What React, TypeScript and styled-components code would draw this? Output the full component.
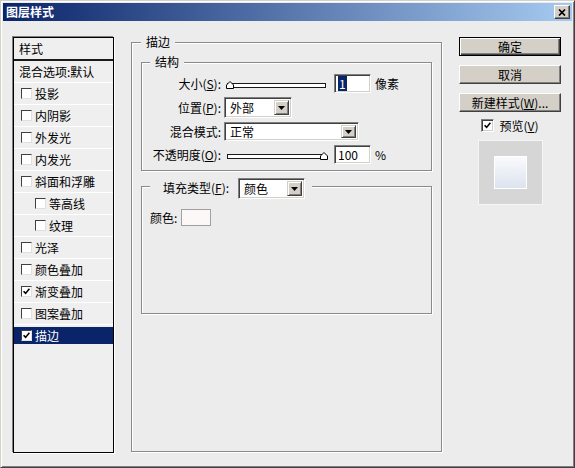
import styled, { createGlobalStyle } from "styled-components"

const GlobalStyle = createGlobalStyle`
*{
    box-sizing: border-box;
}
html, body{
    margin: 0;
    padding: 0;
    background: #ececec;
}
body{
    font-family: "Noto Sans CJK SC", "Liberation Sans", sans-serif;
    font-size: 12px;
    color: #000;
}
`

type Effect = { label: string; checked?: boolean; indent?: boolean; selected?: boolean }

const effects: Effect[] = [
    { label: "投影" },
    { label: "内阴影" },
    { label: "外发光" },
    { label: "内发光" },
    { label: "斜面和浮雕" },
    { label: "等高线", indent: true },
    { label: "纹理", indent: true },
    { label: "光泽" },
    { label: "颜色叠加" },
    { label: "渐变叠加", checked: true },
    { label: "图案叠加" },
    { label: "描边", checked: true, selected: true },
]

const Tick = () => (
    <svg width="7" height="7" viewBox="0 0 7 7">
        <path d="M0.6 3.2 L2.6 5.4 L6.4 0.8" fill="none" stroke="#000" strokeWidth="1.6" />
    </svg>
)

const DownArrow = () => (
    <svg width="7" height="4" viewBox="0 0 7 4">
        <path d="M0 0 H7 L3.5 4 Z" fill="#000" />
    </svg>
)

const CloseGlyph = () => (
    <svg width="8" height="7" viewBox="0 0 8 7">
        <path d="M1 0.5 L7 6.5 M7 0.5 L1 6.5" stroke="#000" strokeWidth="1.7" />
    </svg>
)

// slider: value 0..100, thumb slides along the track
const Slider = ({ value }: { value: number }) => (
    <SliderBox>
        <Track />
        <Thumb style={{ left: 2 + (value / 100) * 94 }}>
            <svg width="8" height="8" viewBox="0 0 8 8">
                <path d="M0.5 7.5 V4 L4 0.5 L7.5 4 V7.5 Z" fill="#fff" stroke="#000" />
            </svg>
        </Thumb>
    </SliderBox>
)

const Dropdown = ({ text, width, height }: { text: string; width: number; height: number }) => (
    <SelectBox $w={width} $h={height}>
        <SelectText>{text}</SelectText>
        <SelectButton>
            <DownArrow />
        </SelectButton>
    </SelectBox>
)

const App = () => {
    return (
        <>
            <GlobalStyle />
            <Win>
                <TitleBar>
                    <span>图层样式</span>
                    <CloseBtn>
                        <CloseGlyph />
                    </CloseBtn>
                </TitleBar>
                <Body>
                    <StyleList>
                        <ListHeader>样式</ListHeader>
                        <ListRow $inset={5}>混合选项:默认</ListRow>
                        {effects.map((e) => (
                            <ListRow key={e.label} $inset={e.indent ? 21 : 7} $selected={e.selected}>
                                <ListCheck>{e.checked && <Tick />}</ListCheck>
                                {e.label}
                            </ListRow>
                        ))}
                    </StyleList>

                    <EffectPanel>
                        <PanelTitle>描边</PanelTitle>
                        <StructureGroup>
                            <SubTitle>结构</SubTitle>
                            <FormGrid>
                                <FieldLabel>
                                    大小(<u>S</u>):
                                </FieldLabel>
                                <Field>
                                    <Slider value={0} />
                                    <NumberBox>
                                        <Selection>1</Selection>
                                    </NumberBox>
                                    <Unit>像素</Unit>
                                </Field>

                                <FieldLabel>
                                    位置(<u>P</u>):
                                </FieldLabel>
                                <Field>
                                    <Dropdown text="外部" width={68} height={21} />
                                </Field>

                                <FieldLabel>混合模式:</FieldLabel>
                                <Field>
                                    <Dropdown text="正常" width={135} height={19} />
                                </Field>

                                <FieldLabel>
                                    不透明度(<u>O</u>):
                                </FieldLabel>
                                <Field>
                                    <Slider value={100} />
                                    <NumberBox>100</NumberBox>
                                    <Unit>%</Unit>
                                </Field>
                            </FormGrid>
                        </StructureGroup>

                        <FillGroup>
                            <FillLegend>
                                <FillLabel>
                                    填充类型(<u>F</u>):
                                </FillLabel>
                                <FillSelect>
                                    <Dropdown text="颜色" width={67} height={21} />
                                </FillSelect>
                            </FillLegend>
                            <ColorRow>
                                <span>颜色:</span>
                                <Swatch />
                            </ColorRow>
                        </FillGroup>
                    </EffectPanel>

                    <Actions>
                        <Button $primary>确定</Button>
                        <Button>取消</Button>
                        <Button>
                            新建样式(<u>W</u>)...
                        </Button>
                        <PreviewToggle>
                            <PreviewCheck>
                                <Tick />
                            </PreviewCheck>
                            <span>
                                预览(<u>V</u>)
                            </span>
                        </PreviewToggle>
                        <PreviewBox>
                            <PreviewSwatch />
                        </PreviewBox>
                    </Actions>
                </Body>
            </Win>
        </>
    )
}
export default App

const Win = styled.div`
width: 575px;
height: 468px;
display: flex;
flex-direction: column;
background: #ececec;
border: 1px solid;
border-color: #d4d0c8 #404040 #404040 #d4d0c8;
box-shadow: inset 1px 1px 0 #fff, inset -1px -1px 0 #808080;
padding: 2px;
`
const TitleBar = styled.div`
height: 18px;
flex: none;
display: flex;
align-items: center;
justify-content: space-between;
padding: 0 2px 0 3px;
background: linear-gradient(to right, #0a246a, #a6caf0);
color: #fff;
font-weight: bold;
font-size: 12px;
line-height: 14px;
`
const CloseBtn = styled.div`
width: 16px;
height: 14px;
display: flex;
align-items: center;
justify-content: center;
background: #d4d0c8;
border: 1px solid;
border-color: #fff #404040 #404040 #fff;
box-shadow: inset -1px -1px 0 #808080;
`
const Body = styled.div`
flex: 1;
min-height: 0;
display: flex;
align-items: stretch;
gap: 17px;
padding: 16px 11px 12px 10px;
`
const StyleList = styled.div`
width: 101px;
flex: none;
display: flex;
flex-direction: column;
background: #efefef;
border: 1px solid #000;
box-shadow: -1px -1px 0 #808080, 1px 1px 0 #fff;
`
const ListHeader = styled.div`
height: 23px;
flex: none;
padding-left: 5px;
line-height: 21px;
border-bottom: 2px solid #1a1a1a;
`
const ListRow = styled.div<{ $inset: number; $selected?: boolean }>`
height: 22px;
flex: none;
display: flex;
align-items: center;
gap: 3px;
padding-left: ${(p) => p.$inset}px;
line-height: 21px;
white-space: nowrap;
border-bottom: 1px solid ${(p) => (p.$selected ? "transparent" : "#fff")};
color: ${(p) => (p.$selected ? "#fff" : "#000")};
background: ${(p) =>
    p.$selected ? "linear-gradient(#0a246a, #0a246a) 0 2px / 100% 17px no-repeat" : "none"};
`
const ListCheck = styled.span`
width: 11px;
height: 11px;
flex: none;
display: inline-flex;
align-items: center;
justify-content: center;
background: #fff;
border: 1px solid;
border-color: #404040 #e0e0e0 #e0e0e0 #404040;
`
const Group = styled.fieldset`
margin: 0;
min-width: 0;
border: 1px solid #8a8a8a;
box-shadow: inset 1px 1px 0 #fff, 1px 1px 0 #fff;
`
const EffectPanel = styled(Group)`
width: 311px;
flex: none;
margin: -1px 0 1px;
padding: 8px 9px 0;
`
const PanelTitle = styled.legend`
padding: 0 5px;
line-height: 12px;
background: #ececec;
`
const SubTitle = styled.legend`
margin-left: 8px;
padding: 0 5px;
line-height: 12px;
background: #ececec;
`
const StructureGroup = styled(Group)`
padding: 6px 0;
`
const FormGrid = styled.div`
display: grid;
grid-template-columns: 79px auto;
column-gap: 3px;
row-gap: 4px;
align-items: center;
`
const FieldLabel = styled.span`
text-align: right;
white-space: nowrap;
line-height: 14px;
`
const Field = styled.div`
display: flex;
align-items: center;
`
const SliderBox = styled.div`
position: relative;
width: 104px;
height: 19px;
flex: none;
display: flex;
align-items: flex-start;
padding: 9px 2px 0 3px;
`
const Track = styled.div`
flex: 1;
height: 5px;
background: #fff;
border: 1px solid #1a1a1a;
`
const Thumb = styled.div`
position: absolute;
top: 7px;
width: 8px;
height: 8px;
display: flex;
`
const NumberBox = styled.div`
width: 37px;
height: 19px;
margin-left: 6px;
padding: 1px 0 0 3px;
background: #fff;
border: 1px solid;
border-color: #808080 #fff #fff #808080;
box-shadow: inset 1px 1px 0 #404040, inset -1px -1px 0 #d4d0c8;
line-height: 15px;
`
const Selection = styled.span`
display: inline-block;
padding: 0 1px;
background: #0a246a;
color: #fff;
`
const Unit = styled.span`
margin-left: 4px;
`
const SelectBox = styled.div<{ $w: number; $h: number }>`
width: ${(p) => p.$w}px;
height: ${(p) => p.$h}px;
flex: none;
display: flex;
align-items: stretch;
padding: 2px;
background: #fff;
border: 1px solid;
border-color: #808080 #fff #fff #808080;
box-shadow: inset 1px 1px 0 #404040, inset -1px -1px 0 #d4d0c8;
`
const SelectText = styled.span`
flex: 1;
padding-left: 3px;
display: flex;
align-items: center;
`
const SelectButton = styled.span`
width: 15px;
flex: none;
display: flex;
align-items: center;
justify-content: center;
background: #d4d0c8;
border: 1px solid;
border-color: #d4d0c8 #404040 #404040 #d4d0c8;
box-shadow: inset 1px 1px 0 #fff, inset -1px -1px 0 #808080;
`
const FillGroup = styled(Group)`
margin-top: 7px;
padding: 15px 0 87px 8px;
`
const FillLegend = styled.legend`
display: flex;
align-items: flex-start;
gap: 9px;
padding: 0 7px 0 13px;
background: #ececec;
`
const FillLabel = styled.span`
height: 16px;
padding-top: 4px;
line-height: 12px;
white-space: nowrap;
`
const FillSelect = styled.div`
margin-bottom: -5px;
`
const ColorRow = styled.div`
display: flex;
align-items: center;
gap: 4px;
height: 17px;
`
const Swatch = styled.div`
width: 30px;
height: 17px;
background: #fdf8f8;
border: 1px solid #a0a0a0;
`
const Actions = styled.div`
width: 102px;
flex: none;
display: flex;
flex-direction: column;
align-items: center;
`
const Button = styled.button<{ $primary?: boolean }>`
width: 100%;
height: 19px;
margin: 0 0 9px;
padding: 0;
font-family: inherit;
font-size: 12px;
line-height: 14px;
color: #000;
background: #d4d0c8;
border: 1px solid;
border-color: ${(p) => (p.$primary ? "#000" : "#fff #404040 #404040 #fff")};
box-shadow: ${(p) =>
    p.$primary
        ? "inset 1px 1px 0 #fff, inset -1px -1px 0 #404040, inset -2px -2px 0 #808080"
        : "inset -1px -1px 0 #808080"};
`
const PreviewToggle = styled.label`
display: flex;
align-items: center;
gap: 5px;
margin-top: -2px;
line-height: 13px;
`
const PreviewCheck = styled.span`
width: 13px;
height: 13px;
display: inline-flex;
align-items: center;
justify-content: center;
background: #fff;
border: 1px solid;
border-color: #808080 #fff #fff #808080;
box-shadow: inset 1px 1px 0 #404040, inset -1px -1px 0 #d4d0c8;
`
const PreviewBox = styled.div`
width: 65px;
height: 65px;
margin-top: 8px;
display: flex;
align-items: center;
justify-content: center;
background: #d6d6d6;
border: 1px solid #f6f6f6;
`
const PreviewSwatch = styled.div`
width: 33px;
height: 33px;
border: 1px solid #fff;
background: linear-gradient(#f9fafc, #dce3ee);
`
